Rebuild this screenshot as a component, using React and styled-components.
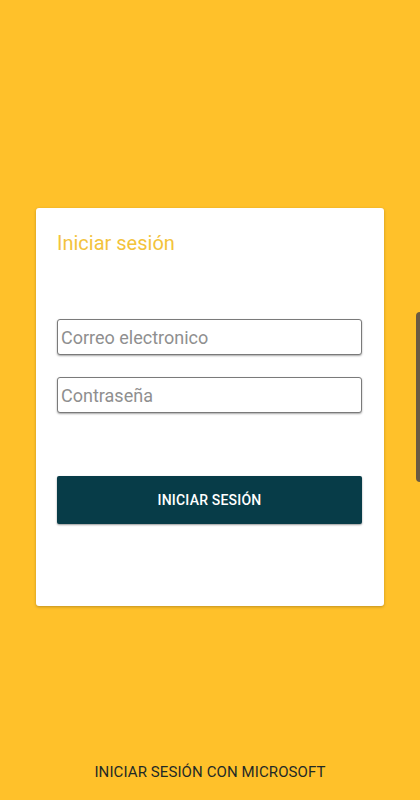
import styled, { createGlobalStyle } from "styled-components";

const Global = createGlobalStyle`
  html, body { margin: 0; padding: 0; }
  body { font-family: Roboto, "Liberation Sans", sans-serif; background: #ffc12a; }
  * { box-sizing: border-box; }
`;

const Page = styled.div`
  position: relative;
  width: 420px;
  height: 800px;
  background: #ffc12a;
  display: flex;
  flex-direction: column;
  align-items: center;
  overflow: hidden;
`;

const Card = styled.div`
  margin-top: 208px;
  width: 348px;
  height: 398px;
  background: #fff;
  border-radius: 3px;
  box-shadow: 0 1px 3px rgba(0, 0, 0, 0.25);
  padding: 22px 21px 0 21px;
  display: flex;
  flex-direction: column;
`;

const Title = styled.h1`
  margin: 0;
  font-size: 20px;
  font-weight: 400;
  color: #f3c33c;
  line-height: 26px;
`;

const Input = styled.input`
  width: 305px;
  height: 36px;
  margin-top: ${(p) => p.top}px;
  border: 1px solid #7a7a7a;
  border-radius: 3px;
  box-shadow: 0 1px 2px rgba(0, 0, 0, 0.35);
  padding: 0 3px;
  font-family: Roboto, "Liberation Sans", sans-serif;
  font-size: 18px;
  color: #333;
  outline: none;
  &::placeholder { color: #8f8f8f; }
`;

const Button = styled.button`
  margin-top: 63px;
  width: 305px;
  height: 48px;
  border: none;
  border-radius: 2px;
  background: #073c48;
  box-shadow: 0 1px 2px rgba(0, 0, 0, 0.4);
  color: #fff;
  font-family: Roboto, "Liberation Sans", sans-serif;
  font-size: 14px;
  font-weight: 500;
  letter-spacing: 0.2px;
`;

const Footer = styled.div`
  margin-top: auto;
  margin-bottom: 19px;
  font-size: 15px;
  color: #1f2a26;
  letter-spacing: 0.1px;
`;

const ScrollThumb = styled.div`
  position: absolute;
  right: -4px;
  top: 312px;
  width: 8px;
  height: 170px;
  border-radius: 4px;
  background: #6a5a42;
`;

export default function App() {
  return (
    <Page>
      <Global />
      <Card>
        <Title>Iniciar sesión</Title>
        <Input top={63} placeholder="Correo electronico" />
        <Input top={22} type="password" placeholder="Contraseña" />
        <Button>INICIAR SESIÓN</Button>
      </Card>
      <Footer>INICIAR SESIÓN CON MICROSOFT</Footer>
      <ScrollThumb />
    </Page>
  );
}
